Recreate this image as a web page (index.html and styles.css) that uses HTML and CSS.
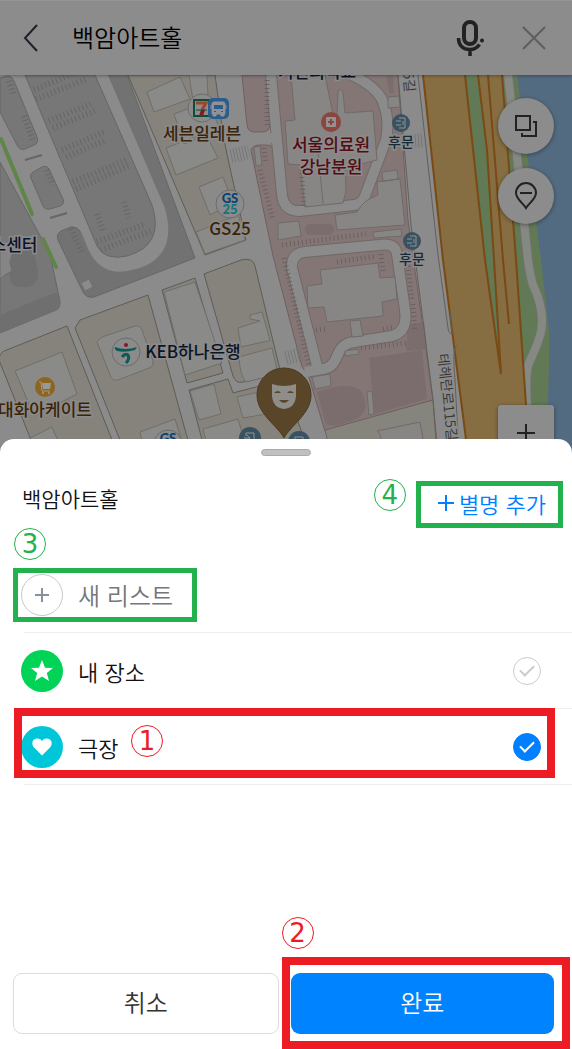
FILE: index.html
```
<!DOCTYPE html>
<html lang="ko">
<head>
    <meta charset="UTF-8">
    <meta name="viewport" content="width=device-width, initial-scale=1.0">
    <title>백암아트홀</title>
    <link rel="stylesheet" href="styles.css">
</head>
<body>
    <div class="screen">
        <!-- Search bar -->
        <header class="search">
            <button class="icon-btn" aria-label="뒤로">
                <svg width="16" height="28" viewBox="0 0 16 28"><path d="M14 1L2 14l12 13" fill="none" stroke="#20202a" stroke-width="2"/></svg>
            </button>
            <input type="text" class="search-input" value="백암아트홀" aria-label="검색">
            <button class="icon-btn" aria-label="음성 검색">
                <svg width="30" height="36" viewBox="0 0 30 36" fill="none" stroke="#222" stroke-width="4">
                    <rect x="9" y="2" width="12" height="22" rx="6"/>
                    <path d="M3.500 18c0 8 5 11.500 11.500 11.500 4 0 7-1.500 9.500-5M15 29v7" stroke-width="3.500"/>
                    <circle cx="27" cy="20.500" r="2" fill="#222" stroke="none"/>
                </svg>
            </button>
            <button class="icon-btn close" aria-label="지우기">
                <svg width="24" height="24" viewBox="0 0 24 24"><path d="M1 1l22 22M23 1L1 23" stroke="#5c5e60" stroke-width="2"/></svg>
            </button>
        </header>

        <!-- Map -->
        <div class="map">
            <svg class="map-canvas" viewBox="0 75 572 380" preserveAspectRatio="xMidYMin slice">
                <rect y="75" width="572" height="380" fill="#8b8b8b"/>

                <!-- parking lots -->
                <g fill="#777" stroke="#666" stroke-width="1" stroke-linejoin="round">
                    <path d="M0 78l8-2q4 0 6 5l23 56q2 6-3 8l-9 4q-5 2-8-4L0 112z"/>
                    <path d="M0 162l50 92 9 43q3 10-3 13L0 333z"/>
                    <path d="M31 178q-2-4 2-6l9-5q5-2 7 2l14 30q2 5-3 7l-10 3q-5 1-7-3z"/>
                    <path d="M108 75h19l68 183-101 39q-8 2-12-7L58 240q-2-6 3-9l10-4q5-1 9 4l20 30 55-15z" fill="#727272"/>
                    <path d="M22 70l74 177q10 20 30 16 45-7 31-53L97 70z" stroke="#8b8b8b" stroke-width="16"/>
                    <path d="M25 75h70l57 130q13 40-25 51-22 5-30-10z"/>
                </g>
                <path d="M0 315l54-22q8-1 6 12 0 4-5 6L0 333zM10 278q0 10 15 9 14 0 13-17l-6-25-24-7z" fill="#6f6f6f"/>
                <path d="M0 242l14 6-4 14 2 9-7 4-5 4z" fill="#858585" stroke="#6c6c6c"/>
                <path d="M81 283l8-4 4 8-8 4z" fill="#8b8b8b" stroke="#707070"/>
                <path d="M25 160l17-5M50 218l17-5" stroke="#666" stroke-width="2"/>
                <g stroke="#666" stroke-width="6" stroke-dasharray="1 3">
                    <path d="M34 90l45-19M36 99l51-20M49 121l44-18M53 128l44-18M62 150l42-18M66 157l40-17M73 182l53-22M76 189l55-24M97 242l49-18M101 250l50-19"/>
                    <path d="M9 81l5 15M24 116l9 25M47 170l6 15M71 229l12 25M97 214l6 16M124 202l5 16"/>
                </g>
                <path d="M1 139l31 75M43 239l13 28" stroke="#5f8548" stroke-width="4" stroke-linecap="round"/>

                <!-- city blocks -->
                <g fill="#86837c" stroke="#5e5c56" stroke-width="1">
                    <path d="M128 75h87l9 65 6 28 16 72-41 15z"/>
                    <path d="M75 328l5-8 68-25 44 160h-66z"/>
                    <path d="M-1 360q0-6 5-9l63-25 51 129H37z"/>
                    <path d="M162 290l33-12 28 95-36 10z"/>
                    <path d="M204 274l37-14q12-3 14 6l26 108-38 8q-7 2-10-6z"/>
                    <path d="M189 390l39-11 5 14 50-13 27 75H206z"/>
                    <path d="M202 70l2 5 19-5"/>
                </g>
                <g fill="#8a8a89" stroke="#706e6a" stroke-width="1">
                    <path d="M147 92l33-15 10 22-36 13zM189 75h18l1 22-15 3zM174 114l34-13 12 28-36 15zM166 148l39-15 13 25-42 17zM199 187l24-10 10 26-23 12zM196 232l42-17 7 25-40 14z"/>
                    <path d="M97 342l5-5 33-11q5-1 7 4l11 31q1 5-4 7l-31 12q-5 1-7-3zM15 371l47-19 15 42-43 22zM164 292l31-10 27 81-37 12z"/>
                    <path d="M238 328l22-7-10-2 0-4 12-3 8 28-2 1-5 1-22 5zM239 357l33-9 6 26-32 8q-6-6-7-25zM190 391l24-7 7 30-22 6zM203 429l35-10 6 20-36 10zM237 397l35-8 12 22-41 7zM140 432l35-13 8 26-38 10zM30 438l22-11 12 28H35z"/>
                </g>

                <!-- hospital grounds -->
                <g fill="#857676" stroke="#706060" stroke-width="1">
                    <path d="M242 75h24l4 49q0 8-8 8h-8q-6 0-7-7z"/>
                    <path d="M251 150q2-5 9-5h7q7 0 7 10l-7-80h131l10 145 25 180-108 31-18-60q-5-1-6-8l-28-107z"/>
                    <path d="M325 430l108-30 4 55H331z" fill="#85857d"/>
                </g>
                <path d="M386 75h7l1 18h-5zM408 325l16-3 3 27-21 2zM369 358l53-8 5 49-52 15zM317 392q42-14 47 5 6 18-13 24-24 9-26 0z" fill="#7b6d6d"/>
                <rect x="305" y="224" width="29" height="11" rx="5" fill="#7b6d6d"/>
                <path d="M271 75l11 120q2 16 17 16l55-6q8-1 11-9l21-56q4-20-3-38-5-14-31-27M317 366l-25-98q-1-14 12-16l75-7q16-3 18 9l8 56q3 22-13 26l-38 6q-12 1-17 14-4 12-14 13l-14 3" fill="none" stroke="#706767" stroke-width="12" stroke-linejoin="round"/>
                <path d="M271 75l11 120q2 16 17 16l55-6q8-1 11-9l21-56q4-20-3-38-5-14-31-27M317 366l-25-98q-1-14 12-16l75-7q16-3 18 9l8 56q3 22-13 26l-38 6q-12 1-17 14-4 12-14 13l-18 3M246 138h30" fill="none" stroke="#8b8b8b" stroke-width="10" stroke-linejoin="round"/>
                <g fill="#888585" stroke="#706a6a" stroke-width="1">
                    <path d="M285 121l10-1-4-45h34l8 40 4 0 1-23q2-5 5 0l2 21 28-2 4 49-32 8 1 23-3 12-38 4-5-42-12-1z"/>
                    <path d="M335 215l22-3q6-12 21-17l-1-13 23-3 5 46-68 5zM382 172l15-2 1 9-15 2zM388 97l11-1 1 11-12 1zM373 232l28-3 1 7-28 2zM278 223l21-2 2 15-23 4z"/>
                    <path d="M320 270l58-7 2 15 15-1 2 22-15 3 1 14-56 6-3-15-16 1-1-22 15-2zM350 321l10-1 3 16-11 1zM312 377l18-3 1 12-16 3zM367 392l5-1 2 23-5 1zM380 434l-3-3 43-9 6 33h-42zM345 351l13-2 1 5-14 2z"/>
                    <path d="M254 147l6-1 2 19-6 1z"/>
                    <path d="M318 150l5 54" fill="none"/>
                </g>
                <g stroke="#6b6060" stroke-width="5" stroke-dasharray="1 3">
                    <path d="M267 80v46M264 148l2 16M260 170l13 50M301 165l3 42M282 245l84-11M337 262l39-6M284 258l25 108M408 266l4 34M413 304l2 28M361 348l45-5M316 330l9-1M383 329l11-2M381 254l2 17"/>
                </g>
                <g stroke="#777" stroke-width="14" stroke-dasharray="1 2">
                    <path d="M231 156l18-4M412 141l12-1M286 358l16-4"/>
                </g>

                <!-- expressway and river -->
                <path d="M512 75h60v380h-30z" fill="#536b80"/>
                <path d="M502 75h15l9 70 15 115 8 70q1 60-5 125h-18z" fill="#617955"/>
                <path d="M508 75l10 90 10 95q2 15 5 25 12 25 8 47-3 12-12 31-4 10-2 42" fill="none" stroke="#6f746d" stroke-width="10"/>
                <path d="M508 75l10 90 10 95q2 15 5 25 12 25 8 47-3 12-12 31-4 10-2 42" fill="none" stroke="#868983" stroke-width="8"/>
                <path d="M423 75h79l14 185 10 145 2 50h-60l-25-195z" fill="#876d42"/>
                <path d="M465 75h13l9 75 8 110 6 110-16-110z" fill="#617955"/>
                <path d="M423 75l20 185 25 195M465 75l20 185 16 114M478 75l9 75 7 110 7 114M488 75l15 185 6 64M502 75l14 185 10 145" fill="none" stroke="#7a4a14" stroke-width="2"/>
                <path d="M398 75l13 150 22 175 5 55M418 75l20 180 10 73q1 7 4 5l-2-20M457 345q-5 2-2 35l4 75" fill="none" stroke="#62605b"/>

                <!-- place icons -->
                <g stroke="#6c6c6c" fill="#8b8b8b">
                    <circle cx="202" cy="108" r="14"/>
                    <circle cx="230" cy="204" r="14"/>
                    <circle cx="126" cy="352" r="14"/>
                    <circle cx="168" cy="444" r="14"/>
                </g>
                <path d="M194 100h15v16h-15z" fill="#8d8d8d" stroke="#0e4e38" stroke-width="2"/>
                <path d="M196 103h10l-4 7" fill="none" stroke="#a04428" stroke-width="3"/>
                <path d="M201 110h4l-2 6h-4z" fill="#8e1424"/>
                <path d="M196 110h11" stroke="#0e4e38" stroke-width="1"/>
                <rect x="208" y="98" width="21" height="21" rx="5" fill="#2a5d8e"/>
                <path d="M214 102h9q2 0 2 2v10h-13v-10q0-2 2-2zM213 114h3v2h-3zM221 114h3v2h-3zM211 105v4M226 105v4" fill="#929292" stroke="#929292"/>
                <path d="M214 105h9v4h-9zM214 111h2v1h-2zM221 111h2v1h-2z" fill="#2a5d8e"/>
                <g class="gs">
                    <text x="230" y="203" fill="#0b3f72">GS</text>
                    <text x="230" y="214" fill="#147380">25</text>
                    <text x="168" y="443" fill="#0b3f72">GS</text>
                </g>
                <circle cx="126" cy="345" r="2" fill="#8c1234"/>
                <path d="M115 347q10 4 22 0l-2 3q-10 3-18 1-3-2-2-4z" fill="#0b5c58"/>
                <path d="M122 357q3-4 6-2 2 4-2 8" fill="none" stroke="#0b5c58" stroke-width="3"/>
                <circle cx="331" cy="122" r="10" fill="#8c4640"/>
                <rect x="326" y="117" width="10" height="10" rx="1" fill="#929292"/>
                <path d="M331 119v6M328 122h6" stroke="#8c4640" stroke-width="2"/>
                <circle cx="45" cy="387" r="10" fill="#8e651e"/>
                <path d="M39 382h2l1 9h8" fill="none" stroke="#999"/>
                <path d="M42 383h9l-1 6h-7z" fill="#999"/>
                <circle cx="43" cy="393" r="1" fill="#999"/>
                <circle cx="49" cy="393" r="1" fill="#999"/>
                <g fill="#385261">
                    <circle cx="401" cy="123" r="9"/>
                    <circle cx="412" cy="241" r="9"/>
                    <circle cx="250" cy="438" r="11"/>
                    <circle cx="299" cy="442" r="11"/>
                </g>
                <g fill="none" stroke="#929292">
                    <path d="M399 118h6v10h-6M396 121h5M396 125h5M403 121v4M410 236h6v10h-6M407 239h5M407 243h5M414 239v4M246 436v-3h8v10M244 438h6M247 435l3 3-3 3M295 439v-2h8v6"/>
                </g>

                <!-- place names -->
                <g class="place">
                    <text x="202" y="140" fill="#3a2408">세븐일레븐</text>
                    <text x="230" y="235" fill="#3a2408">GS25</text>
                    <text x="331" y="151" fill="#520c12">서울의료원</text>
                    <text x="331" y="173" fill="#520c12">강남분원</text>
                    <text x="193" y="358" fill="#0b1422">KEB하나은행</text>
                    <text x="45" y="416" fill="#3a2408">대화아케이트</text>
                    <text x="14" y="251" fill="#101228">스센터</text>
                    <text x="317" y="78" fill="#101228">기전외식교</text>
                </g>
                <g class="place small">
                    <text x="401" y="147" fill="#162a38">후문</text>
                    <text x="412" y="264" fill="#162a38">후문</text>
                </g>
                <text class="road" transform="translate(438 354) rotate(84)">테헤란로115길</text>
                <text class="road" transform="translate(403 72) rotate(84)">5길</text>

                <!-- selected place -->
                <path d="M284 438c-6-12-27-24-27-43a27 27 0 0 1 54 0c0 19-21 31-27 43z" fill="#594628" stroke="#4a3a20"/>
                <path d="M272 384q12 4 24 0v12q-1 12-12 13-11-1-12-13z" fill="#8f8d89"/>
                <path d="M274 393q4-4 7 0zM287 393q3-4 7 0zM279 400h10q-5 6-10 0z" fill="#594628"/>
            </svg>
            <div class="map-controls">
                <button class="round" aria-label="레이어">
                    <svg width="24" height="24" viewBox="0 0 24 24" fill="none" stroke="#222" stroke-width="2"><path d="M2 2h14v14H2zM19 8h3v14H8v-3"/></svg>
                </button>
                <button class="round" aria-label="핀 숨기기">
                    <svg width="24" height="28" viewBox="0 0 24 28" fill="none" stroke="#222" stroke-width="2"><path d="M12 26C9 21 2 17 2 11a10 10 0 0 1 20 0c0 6-7 10-10 15zM6 11h12"/></svg>
                </button>
            </div>
            <button class="zoom-in" aria-label="확대">
                <svg width="18" height="18" viewBox="0 0 18 18"><path d="M9 0v18M0 9h18" stroke="#222" stroke-width="2"/></svg>
            </button>
        </div>

        <!-- Save to list sheet -->
        <main class="sheet">
            <div class="handle"></div>
            <div class="sheet-head">
                <h1>백암아트홀</h1>
                <button class="alias marked">
                    <svg width="16" height="16" viewBox="0 0 16 16"><path d="M8 0v16M0 8h16" stroke="#0080ff" stroke-width="2"/></svg>
                    별명 추가
                    <span class="step step-4">4</span>
                </button>
            </div>

            <ul class="lists">
                <li>
                    <button class="new-list marked">
                        <span class="dot dot-new"><svg width="14" height="14" viewBox="0 0 14 14"><path d="M7 0v14M0 7h14" stroke="#8a8f9c" stroke-width="2"/></svg></span>
                        새 리스트
                        <span class="step step-3">3</span>
                    </button>
                </li>
                <li>
                    <label class="row" for="myplace">
                        <span class="dot dot-green"><svg width="22" height="22" viewBox="0 0 22 22"><path d="M11 0l3 7.700 8 .3-6.200 5 2.200 8-7-4.500L4 21l2.200-8L0 8l8-.3z" fill="#fff"/></svg></span>
                        내 장소
                        <input type="checkbox" id="myplace">
                    </label>
                </li>
                <li>
                    <label class="row" for="theater">
                        <span class="dot dot-cyan"><svg width="20" height="18" viewBox="0 0 20 18"><path d="M10 17.500L2 9.500C-1 6 0 1 5 .5 7.500.3 9 1.500 10 3 11 1.500 12.500.3 15 .5c5 .5 6 5.500 3 9z" fill="#fff"/></svg></span>
                        극장
                        <input type="checkbox" id="theater" checked>
                    </label>
                    <span class="frame frame-row"></span>
                    <span class="step red step-1">1</span>
                </li>
            </ul>

            <div class="actions">
                <button class="cancel">취소</button>
                <div class="done-wrap">
                    <button class="done">완료</button>
                    <span class="frame frame-done"></span>
                    <span class="step red step-2">2</span>
                </div>
            </div>
        </main>
    </div>
</body>
</html>
```

FILE: styles.css
```
* {
    box-sizing: border-box;
}
body {
    margin: 0;
    font-family: "Noto Sans CJK KR", sans-serif;
    font-weight: 350;
    background: #fff;
    color: #111;
}
button, input {
    font-family: inherit;
    font-weight: inherit;
    margin: 0;
    padding: 0;
}
button {
    border: none;
    background: none;
    cursor: pointer;
}
svg {
    display: block;
    flex: none;
}
.screen {
    display: flex;
    flex-direction: column;
    min-height: 100vh;
    overflow: hidden;
}

/* search bar */
.search {
    display: flex;
    align-items: center;
    height: 75px;
    padding: 0 26px 0 23px;
    background: #8c8c8c;
    border-top: 1px solid #959595;
    box-shadow: 0 1px 3px rgba(0, 0, 0, 0.3);
    position: relative;
    z-index: 1;
}
.search-input {
    flex: 1;
    min-width: 0;
    margin-left: 33px;
    padding-bottom: 4px;
    border: none;
    background: none;
    font-size: 24px;
    color: #000;
}
.close {
    margin-left: 37px;
}

/* map */
.map {
    position: relative;
    height: 380px;
}
.map-canvas {
    width: 100%;
    height: 100%;
}
.place {
    font-size: 17px;
    font-weight: 500;
    text-anchor: middle;
    paint-order: stroke;
    stroke: #8b8b8b;
    stroke-width: 3px;
}
.small {
    font-size: 14px;
}
.gs {
    font-family: Lato, sans-serif;
    font-size: 13px;
    font-weight: 900;
    text-anchor: middle;
}
.road {
    font-size: 14px;
    fill: #333;
    paint-order: stroke;
    stroke: #8b8b8b;
    stroke-width: 3px;
}
.map-controls {
    position: absolute;
    top: 23px;
    right: 18px;
    display: flex;
    flex-direction: column;
    gap: 14px;
}
.round, .zoom-in {
    display: flex;
    justify-content: center;
    align-items: center;
    width: 56px;
    height: 56px;
    background: #8c8c8c;
    border-radius: 50%;
    box-shadow: 0 1px 4px rgba(0, 0, 0, 0.4);
}
.zoom-in {
    position: absolute;
    right: 18px;
    bottom: -6px;
    border-radius: 3px;
}

/* bottom sheet */
.sheet {
    flex: 1;
    display: flex;
    flex-direction: column;
    margin-top: -16px;
    padding-top: 10px;
    background: #fff;
    border-radius: 14px 14px 0 0;
    position: relative;
}
.handle {
    width: 50px;
    height: 7px;
    margin: 0 auto;
    border-radius: 4px;
    background: #c0c0c0;
    border: 1px solid #aaa;
}
.sheet-head {
    display: flex;
    justify-content: space-between;
    align-items: center;
    margin-top: 25px;
    padding: 0 9px 0 22px;
}
h1 {
    margin: 0 0 14px;
    font-size: 21px;
    line-height: 30px;
    font-weight: inherit;
}
.marked {
    position: relative;
    display: flex;
    align-items: center;
    border: 5px solid #22b14c;
}
.alias {
    gap: 5px;
    height: 47px;
    padding: 0 12px 4px 17px;
    font-size: 22px;
    color: #0080ff;
}
.lists {
    list-style: none;
    margin: 29px 0 0;
    padding: 0;
}
.lists li {
    position: relative;
    display: flex;
    align-items: center;
    height: 76px;
}
.lists li::after {
    content: "";
    position: absolute;
    left: 24px;
    right: 0;
    bottom: 0;
    border-bottom: 1px solid #eee;
}
.new-list {
    gap: 15px;
    height: 54px;
    margin-left: 13px;
    padding: 0 19px 0 3px;
    font-size: 24px;
    line-height: 40px;
    color: #777;
}
.row {
    flex: 1;
    display: flex;
    align-items: center;
    gap: 15px;
    padding: 0 31px 0 21px;
    font-size: 22px;
}
.dot {
    display: flex;
    justify-content: center;
    align-items: center;
    width: 42px;
    height: 42px;
    border-radius: 50%;
}
.dot-new {
    border: 1px solid #c8c8d0;
}
.dot-green {
    background: #00d355;
}
.dot-cyan {
    background: #00c6da;
}
.row input {
    appearance: none;
    display: flex;
    justify-content: center;
    align-items: center;
    width: 28px;
    height: 28px;
    margin-left: auto;
    border: 1px solid #ccc;
    border-radius: 50%;
}
.row input::after {
    content: "";
    width: 6px;
    height: 12px;
    margin-bottom: 4px;
    border: solid #ccc;
    border-width: 0 2px 2px 0;
    transform: rotate(45deg);
}
.row input:checked {
    background: #0080ff;
    border-color: #0080ff;
}
.row input:checked::after {
    border-color: #fff;
}

/* buttons */
.actions {
    display: flex;
    gap: 12px;
    margin-top: auto;
    padding: 24px 18px 15px 13px;
}
.cancel, .done {
    height: 61px;
    padding-bottom: 4px;
    border-radius: 9px;
    font-size: 24px;
}
.cancel {
    flex: 1;
    border: 1px solid #ddd;
    color: #333;
}
.done-wrap {
    position: relative;
    flex: 1;
}
.done {
    width: 100%;
    background: #0083ff;
    color: #fff;
}

/* step marks */
.frame {
    position: absolute;
    border: 8px solid #ed1c24;
    pointer-events: none;
    z-index: 1;
}
.frame-row {
    inset: -1px 17px 7px 14px;
}
.frame-done {
    inset: -16px -16px -15px -9px;
}
.step {
    position: absolute;
    width: 32px;
    height: 32px;
    border: 1px solid #22b14c;
    border-radius: 50%;
    font-family: "DejaVu Sans", sans-serif;
    font-size: 26px;
    font-weight: 400;
    line-height: 30px;
    text-align: center;
    color: #22b14c;
}
.red {
    border-color: #ed1c24;
    color: #ed1c24;
}
.step-1 {
    left: 131px;
    top: 16px;
}
.step-2 {
    left: -9px;
    top: -56px;
}
.step-3 {
    left: -4px;
    top: -45px;
}
.step-4 {
    left: -47px;
    top: -7px;
}
```
